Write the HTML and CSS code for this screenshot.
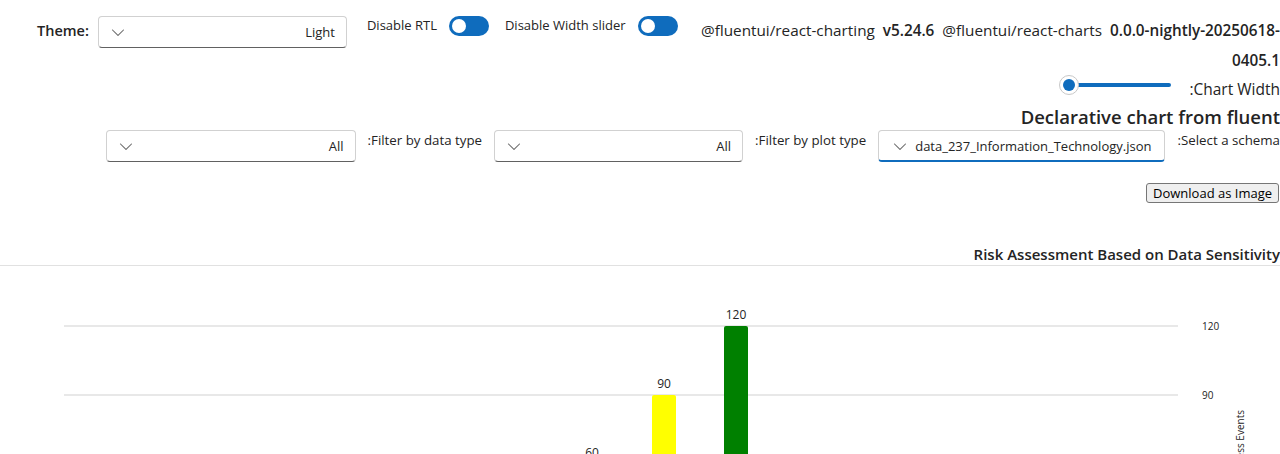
FILE: index.html
```html
<!DOCTYPE html>
<html lang="en">
<head>
<meta charset="utf-8">
<title>Declarative chart</title>
<link rel="stylesheet" href="styles.css">
</head>
<body>
<div class="top">
  <div class="theme">
    <span class="theme-label">Theme:</span>
    <div class="dropdown dd-fixed">
      <svg class="chev" width="20" height="20" viewBox="0 0 20 20"><path d="M15.85 7.65c.2.2.2.5 0 .7l-5.46 5.49a.55.55 0 0 1-.78 0L4.15 8.350a.5.5 0 1 1 .7-.7L10 12.8l5.150-5.16c.2-.2.5-.2.7 0Z"/></svg>
      <span class="dd-value">Light</span>
    </div>
  </div>
  <div class="toggle-group">
    <span class="toggle-label">Disable RTL</span>
    <span class="switch"><span class="knob"></span></span>
  </div>
  <div class="toggle-group">
    <span class="toggle-label">Disable Width slider</span>
    <span class="switch"><span class="knob"></span></span>
  </div>
  <div class="versions">
    <span class="pkg">@fluentui/react-charting</span> <b class="ver">v5.24.6</b> <span class="pkg">@fluentui/react-charts</span> <b>0.0.0-nightly-20250618-<wbr>0405.1</b>
  </div>
</div>

<div class="main" dir="rtl">
  <div class="width-row">
    <span class="width-label">Chart Width:</span>
    <div class="slider">
      <div class="track"></div>
      <span class="thumb"><span class="thumb-dot"></span></span>
    </div>
  </div>

  <h1 class="title">Declarative chart from fluent</h1>

  <div class="filters">
    <span class="filter-label">Select a schema:</span>
    <div class="dropdown dd-auto focused" dir="ltr">
      <svg class="chev" width="20" height="20" viewBox="0 0 20 20"><path d="M15.85 7.65c.2.2.2.5 0 .7l-5.46 5.49a.55.55 0 0 1-.78 0L4.15 8.35a.5.5 0 1 1 .7-.7L10 12.8l5.15-5.16c.2-.2.5-.2.7 0Z"/></svg>
      <span class="dd-value">data_237_Information_Technology.json</span>
    </div>
    <span class="filter-label">Filter by plot type:</span>
    <div class="dropdown dd-fixed" dir="ltr">
      <svg class="chev" width="20" height="20" viewBox="0 0 20 20"><path d="M15.85 7.65c.2.2.2.5 0 .7l-5.46 5.49a.55.55 0 0 1-.78 0L4.15 8.35a.5.5 0 1 1 .7-.7L10 12.8l5.15-5.16c.2-.2.5-.2.7 0Z"/></svg>
      <span class="dd-value">All</span>
    </div>
    <span class="filter-label">Filter by data type:</span>
    <div class="dropdown dd-fixed dd-wide" dir="ltr">
      <svg class="chev" width="20" height="20" viewBox="0 0 20 20"><path d="M15.85 7.65c.2.2.2.5 0 .7l-5.46 5.49a.55.55 0 0 1-.78 0L4.15 8.35a.5.5 0 1 1 .7-.7L10 12.8l5.15-5.16c.2-.2.5-.2.7 0Z"/></svg>
      <span class="dd-value">All</span>
    </div>
  </div>

  <div class="download-row">
    <button class="download" type="button" dir="ltr">Download as Image</button>
  </div>

  <div class="chart-title">Risk Assessment Based on Data Sensitivity</div>

  <svg class="chart" width="1280" height="188" viewBox="0 0 1280 188">
    <line class="grid" x1="64" y1="60" x2="1178" y2="60"/>
    <line class="grid" x1="64" y1="129" x2="1178" y2="129"/>
    <text class="tick" x="1202" y="63.5">120</text>
    <text class="tick" x="1202" y="132.5">90</text>
    <text class="axis-title" transform="translate(1244,144) rotate(-90)" text-anchor="end">Number of Access Events</text>
    <path class="bar-green" d="M724 62a2 2 0 0 1 2-2h20a2 2 0 0 1 2 2V200H724Z"/>
    <path class="bar-yellow" d="M652 131a2 2 0 0 1 2-2h20a2 2 0 0 1 2 2V200H652Z"/>
    <path class="bar-blue" d="M580 200a2 2 0 0 1 2-2h20a2 2 0 0 1 2 2V220H580Z"/>
    <text class="bar-label" x="736" y="53" text-anchor="middle">120</text>
    <text class="bar-label" x="664" y="122" text-anchor="middle">90</text>
    <text class="bar-label" x="592" y="191" text-anchor="middle">60</text>
  </svg>
</div>
</body>
</html>
```

FILE: styles.css
```css
* { box-sizing: border-box; }

html, body {
  margin: 0;
  padding: 0;
  background: #ffffff;
}

body {
  font-family: "Open Sans", "Noto Sans", sans-serif;
  font-size: 13px;
  color: #242424;
  overflow: hidden;
  height: 454px;
}

/* ---------- top row ---------- */
.top {
  display: flex;
  align-items: flex-start;
  padding: 16px 0 0 37px;
}

.theme {
  display: flex;
  align-items: center;
  gap: 9px;
  margin-right: 20px;
}

.theme-label {
  font-weight: 600;
  font-size: 14.5px;
  line-height: 20px;
  margin-top: -3px;
}

.dropdown {
  display: flex;
  align-items: center;
  height: 32px;
  border: 1px solid #d1d1d1;
  border-bottom-color: #616161;
  border-radius: 4px;
  background: #ffffff;
  padding: 0 11px 0 9px;
  font-size: 13px;
  color: #242424;
  direction: ltr;
}

.dd-fixed {
  width: 249px;
  justify-content: space-between;
}

.dd-auto {
  gap: 5px;
  padding: 0 13px 0 11px;
}

.focused {
  border-bottom: 2px solid #0f6cbd;
}

.chev {
  fill: #616161;
  flex: none;
}

.dd-value {
  white-space: nowrap;
  line-height: 20px;
}

.toggle-group {
  display: flex;
  align-items: center;
  gap: 12px;
  margin-right: 16px;
  height: 20px;
}

.toggle-label {
  white-space: nowrap;
  line-height: 20px;
  margin-top: -2px;
}

.switch {
  display: flex;
  align-items: center;
  width: 40px;
  height: 20px;
  border-radius: 10px;
  background: #0f6cbd;
  padding: 0 3px;
}

.knob {
  width: 14px;
  height: 14px;
  border-radius: 50%;
  background: #ffffff;
}

.versions {
  flex: 1;
  text-align: right;
  line-height: 30px;
  margin-top: -1px;
  font-size: 15.3px;
  word-spacing: 4px;
}

.versions b {
  font-weight: 600;
  word-spacing: 0;
}

.pkg { word-spacing: 0; }

/* ---------- RTL area ---------- */
.main {
  text-align: right;
}

.width-row {
  display: flex;
  align-items: flex-start;
  gap: 18px;
  height: 27px;
}

.width-label {
  font-size: 15.5px;
  line-height: 20px;
  margin-top: 4px;
  white-space: nowrap;
}

.slider {
  position: relative;
  width: 112px;
  height: 20px;
  display: flex;
  align-items: center;
}

.track {
  width: 102px;
  height: 4px;
  border-radius: 2px;
  background: #0f6cbd;
}

.thumb {
  position: absolute;
  left: 0;
  top: 0;
  width: 20px;
  height: 20px;
  border-radius: 50%;
  background: #ffffff;
  border: 1px solid #c8c8c8;
  display: flex;
  align-items: center;
  justify-content: center;
}

.thumb-dot {
  width: 12px;
  height: 12px;
  border-radius: 50%;
  background: #0f6cbd;
}

.title {
  margin: 2px 0 0 0;
  font-size: 18.5px;
  font-weight: 600;
  line-height: 26px;
  white-space: nowrap;
}

.filters {
  display: flex;
  align-items: flex-start;
  gap: 12px;
  height: 32px;
}

.filter-label {
  font-size: 13.3px;
  line-height: 20px;
  white-space: nowrap;
}

.dd-wide { width: 250px; }

.download-row {
  display: flex;
  padding: 21px 1px 0 0;
}

.download {
  font-family: "Open Sans", "Noto Sans", sans-serif;
  font-size: 13px;
  line-height: 16px;
  height: 20px;
  padding: 0 6px;
  color: #000000;
  background: #efefef;
  border: 1px solid #767676;
  border-radius: 3px;
}

.chart-title {
  margin-top: 41px;
  font-size: 15px;
  font-weight: 600;
  line-height: 20px;
  padding-bottom: 1px;
  border-bottom: 1px solid #e1e1e1;
  white-space: nowrap;
}

.chart {
  display: block;
  direction: ltr;
}

.grid {
  stroke: #d1d1d1;
  stroke-width: 1;
}

.tick {
  font-family: "Open Sans", "Noto Sans", sans-serif;
  font-size: 10px;
  fill: #242424;
}

.axis-title {
  font-family: "Open Sans", "Noto Sans", sans-serif;
  font-size: 10px;
  fill: #242424;
}

.bar-label {
  font-family: "Open Sans", "Noto Sans", sans-serif;
  font-size: 12px;
  fill: #242424;
}

.bar-green { fill: #008000; }
.bar-yellow { fill: #ffff00; }
.bar-blue { fill: #0f6cbd; }
```
